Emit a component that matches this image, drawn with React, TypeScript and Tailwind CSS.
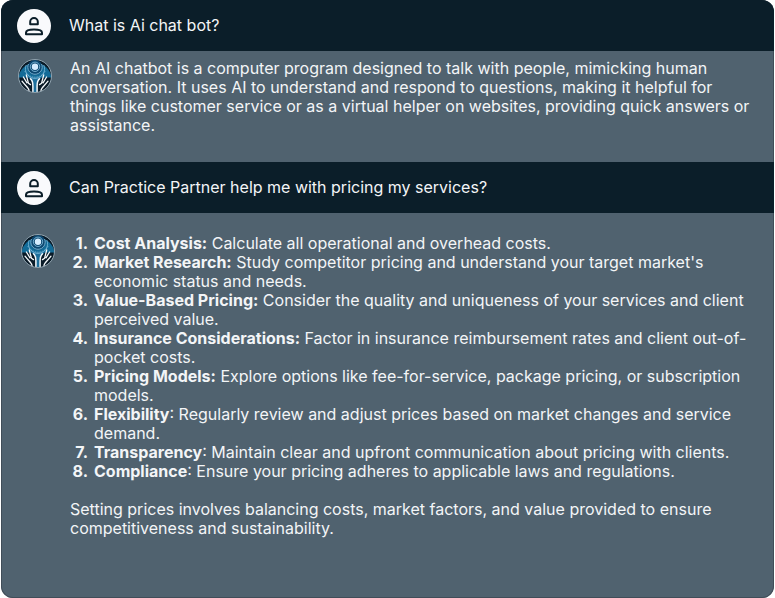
type Tip = { title: string; colon?: "plain"; body: string };

const tips: Tip[] = [
  { title: "Cost Analysis", body: "Calculate all operational and overhead costs." },
  { title: "Market Research", body: "Study competitor pricing and understand your target market's economic status and needs." },
  { title: "Value-Based Pricing", body: "Consider the quality and uniqueness of your services and client perceived value." },
  { title: "Insurance Considerations", body: "Factor in insurance reimbursement rates and client out-of-pocket costs." },
  { title: "Pricing Models", body: "Explore options like fee-for-service, package pricing, or subscription models." },
  { title: "Flexibility", colon: "plain", body: "Regularly review and adjust prices based on market changes and service demand." },
  { title: "Transparency", colon: "plain", body: "Maintain clear and upfront communication about pricing with clients." },
  { title: "Compliance", colon: "plain", body: "Ensure your pricing adheres to applicable laws and regulations." },
];

function UserAvatar() {
  return (
    <svg className="size-[34px] shrink-0" viewBox="0 0 34 34" fill="none" aria-hidden="true">
      <circle cx="17" cy="17" r="17" fill="#f9fafc" />
      <g stroke="#0b1e29" strokeWidth="2" strokeLinejoin="round">
        <path d="M13.2 15.2V12.8a3.8 3.8 0 0 1 7.6 0v2.4Z" />
        <path d="M9 25.2V23.8C9 21.7 12.2 20.6 17 20.6S25 21.7 25 23.8V25.2Z" />
      </g>
    </svg>
  );
}

function BotAvatar() {
  return (
    <svg className="size-[34px] shrink-0" viewBox="0 0 34 34" fill="none" aria-hidden="true">
      <circle cx="17" cy="17" r="16.5" fill="#0a1b28" />
      <path d="M.6 18.6A16.5 16.5 0 0 1 33.4 18.6Z" fill="#136b97" />
      <path d="M10 18H24L19 24V33H15V24Z" fill="#1d6f9c" />
      <circle cx="17" cy="8.5" r="7.5" fill="#0c4770" />
      <g stroke="#8cc6e4">
        <circle cx="17" cy="7.8" r="4.7" strokeWidth="0.8" />
        <path d="M10.5 5A7.2 7.2 0 1 0 23.5 5" strokeWidth="0.8" />
        <path d="M8.2 6A9.6 9.6 0 1 0 25.8 6" strokeWidth="0.7" />
        <path d="M6.8 12A11.5 11.5 0 0 0 27.2 12" strokeWidth="0.7" strokeDasharray="1.5 .8" />
      </g>
      <circle cx="17" cy="7.8" r="3.2" fill="#d5edff" />
      <g stroke="#f4f8fa" strokeLinecap="round" strokeLinejoin="round">
        <path d="M14.9 32.5V27C14.9 23.6 14.4 21.2 12.6 19.8" strokeWidth="1.5" />
        <path d="M11 31.6C11 28.8 7.8 27.2 4 22.2" strokeWidth="1.3" />
        <path d="M5.4 18L9 23.8M8.3 16L10.4 24.2L12.5 25.6" strokeWidth="1.3" />
        <path d="M19.1 32.5V27C19.1 23.6 19.6 21.2 21.4 19.8" strokeWidth="1.5" />
        <path d="M23 31.6C23 28.8 26.2 27.2 30 22.2" strokeWidth="1.3" />
        <path d="M28.6 18L25 23.8M25.7 16L23.6 24.2L21.5 25.6" strokeWidth="1.3" />
      </g>
      <circle cx="17" cy="17" r="16.5" stroke="#a9bdc8" strokeWidth="0.8" />
    </svg>
  );
}

function Question({ text }: { text: string }) {
  return (
    <div className="flex h-[51px] items-center gap-[18px] bg-[#0b1e29] px-4">
      <UserAvatar />
      <p>{text}</p>
    </div>
  );
}

export default function App() {
  return (
    <main className="px-px font-['Inter',sans-serif] text-base/[19px] font-normal text-[#f3f5f7]">
      <div className="overflow-hidden rounded-xl bg-[#50626f] shadow-[inset_0_0_0_1px_#414d58]">
        <Question text="What is Ai chat bot?" />
        <div className="flex gap-4 px-[17px] pt-2 pb-[27px]">
          <BotAvatar />
          <p className="min-w-0 flex-1 pl-0.5">
            An AI chatbot is a computer program designed to talk with people, mimicking human conversation. It uses AI to understand and respond to questions, making it helpful for things like customer service or as a virtual helper on websites, providing quick answers or assistance.
          </p>
        </div>
        <Question text="Can Practice Partner help me with pricing my services?" />
        <div className="flex gap-[15px] px-5 pt-[21px] pb-[60px]">
          <BotAvatar />
          <div className="min-w-0 flex-1">
            <ol>
              {tips.map((tip, i) => (
                <li key={tip.title} className="flex gap-1.5">
                  <span className="w-[18px] shrink-0 text-right font-bold">{i + 1}.</span>
                  <p className="min-w-0 flex-1">
                    <strong className="font-bold">{tip.title}{tip.colon ? "" : ":"}</strong>
                    {tip.colon ? ": " : " "}
                    {tip.body}
                  </p>
                </li>
              ))}
            </ol>
            <p className="mt-[19px]">
              Setting prices involves balancing costs, market factors, and value provided to ensure competitiveness and sustainability.
            </p>
          </div>
        </div>
      </div>
    </main>
  );
}
